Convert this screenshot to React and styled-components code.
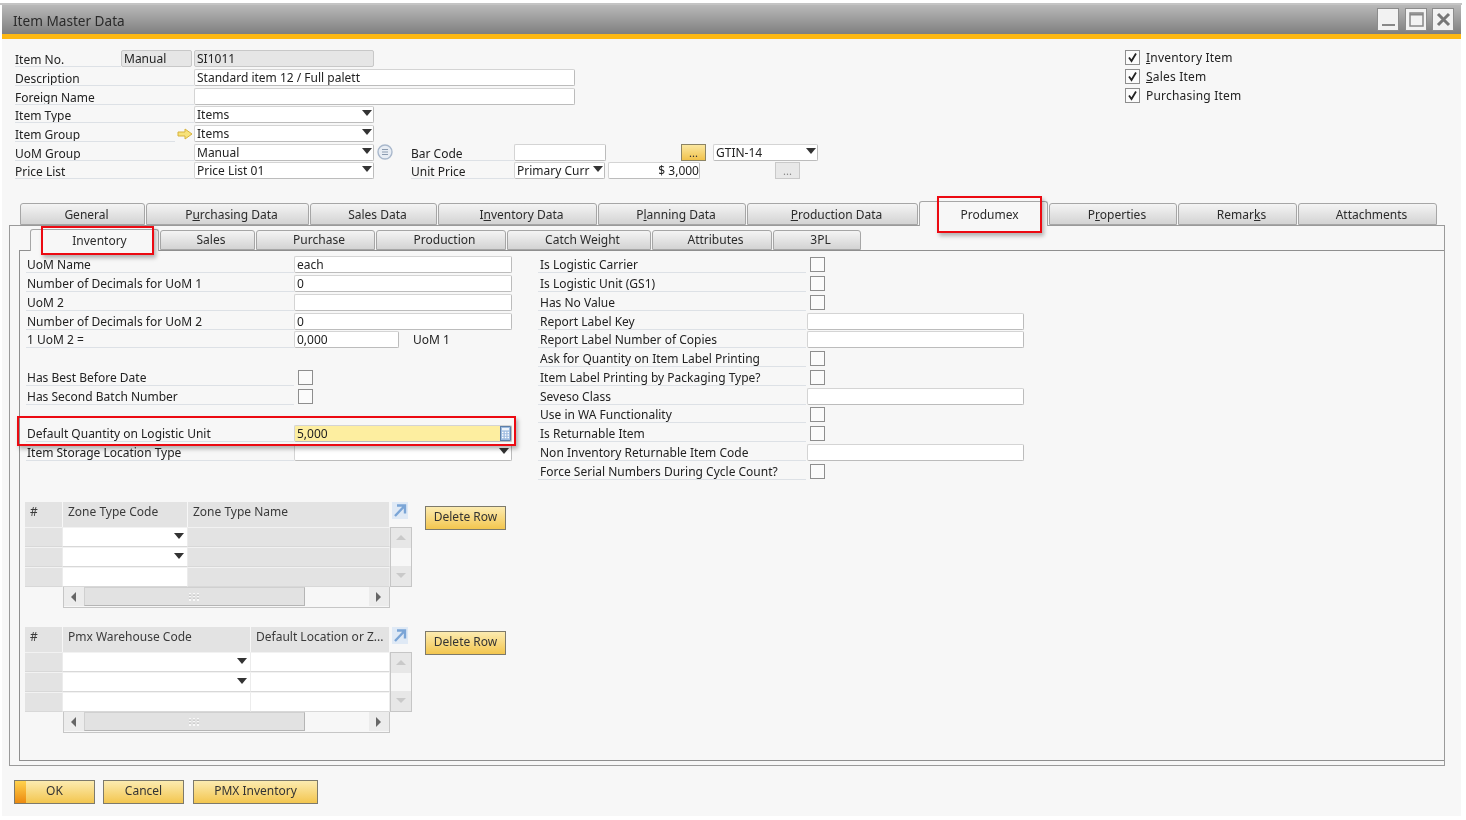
import React from "react";
import styled, { createGlobalStyle } from "styled-components";

const Global = createGlobalStyle`
  html, body { margin: 0; padding: 0; background: #fff; }
  body { font-family: "Noto Sans", "DejaVu Sans", sans-serif; font-size: 12px; color: #222; }
  * { box-sizing: border-box; }
`;

const Page = styled.div`
  width: 1466px; height: 820px; overflow: hidden; position: relative;
  filter: blur(0.35px);
`;
const TopStrip = styled.div`
  height: 5px; margin: 0 4px 0 0;
  border-bottom: 2px solid #c4c4c4;
`;
const Win = styled.div`
  width: 1459px; height: 811px; margin-left: 2px;
  background: #f7f7f7;
  display: flex; flex-direction: column;
`;
const TitleBar = styled.div`
  height: 29px; flex: none;
  background: linear-gradient(#b9b9b9, #7f7f7f);
  display: flex; align-items: center; justify-content: space-between;
  padding: 0 7px 0 11px;
`;
const Title = styled.div`font-size: 13.6px; color: #2a2a2a; padding-top: 2px;`;
const WinButtons = styled.div`display: flex; gap: 5px;`;
const WinBtn = styled.div`
  width: 22px; height: 23px; background: #f2f2f2; border: 1px solid #8c8c8c;
  display: flex; align-items: center; justify-content: center;
  margin-left: ${p => p.$ml || 0}px;
`;
const GoldBand = styled.div`height: 5px; flex: none; background: #fdb813;`;

const Header = styled.div`
  height: 162px; flex: none; display: flex; justify-content: space-between;
  padding: 10.5px 0 0 13px;
`;
const HeadLeft = styled.div`display: flex; flex-direction: column;`;
const HeadRow = styled.div`height: 18.7px; display: flex; align-items: center;`;
const UnderLabel = styled.div`
  width: ${p => p.$w}px; height: 17px; flex: none; line-height: 17px; padding-top: 1px;
  border-bottom: 1px solid #dde1e6; white-space: nowrap; overflow: hidden;
  margin-left: ${p => p.$ml || 0}px; margin-right: ${p => p.$mr || 0}px;
`;
const Field = styled.div`
  width: ${p => p.$w}px; height: 17px; flex: none; position: relative;
  background: ${p => p.$bg || "#fff"};
  border: 1px solid #d4d4d4; border-right-color: #bcbcbc; border-bottom-color: #bcbcbc; border-radius: 2px;
  padding-left: 2px; line-height: 16px; white-space: nowrap; overflow: hidden;
  text-align: ${p => p.$right ? "right" : "left"};
  margin-left: ${p => p.$ml || 0}px;
`;
const Caret = styled.span`
  position: absolute; right: ${p => p.$r ?? 1}px; top: ${p => p.$t ?? 3}px;
  width: 0; height: 0; border-left: 5px solid transparent; border-right: 5px solid transparent;
  border-top: 6px solid #333;
`;
const ReadField = styled(Field)`background: #e6e6e6; border-color: #c8c8c8;`;
const DotsBtn = styled.div`
  width: 25px; height: 17px; flex: none; margin-left: ${p => p.$ml}px;
  background: ${p => p.$gold ? "linear-gradient(#fbe7a0,#f1c24c)" : "#e8e8e8"};
  border: 1px solid ${p => p.$gold ? "#8c8465" : "#c9c9c9"};
  text-align: center; line-height: 15px; font-size: 11px;
  color: ${p => p.$gold ? "#333" : "#888"};
`;
const IconWrap = styled.span`
  display: inline-flex; flex: none; width: ${p => p.$w}px; justify-content: center; align-items: center;
  margin-left: ${p => p.$ml || 0}px;
`;
const HeadRight = styled.div`width: 337px; flex: none; margin-top: -1.5px;`;
const CheckLine = styled.div`height: 19px; display: flex; align-items: center; gap: 6px; margin-left: 1px;`;
const Box = styled.div`
  width: 15px; height: 15px; flex: none; background: #fbfbfb; border: 1px solid #8e8e8e;
  display: flex; align-items: center; justify-content: center;
`;
const CheckText = styled.span`letter-spacing: 0.2px;`;

const TabRow = styled.div`
  display: flex; align-items: flex-end; height: 24px; margin-left: 18px; position: relative; z-index: 2; flex: none;
`;
const Tab = styled.div`
  width: ${p => p.$w}px; height: ${p => p.$active ? 25 : 22}px; flex: none;
  margin-bottom: ${p => p.$active ? -1 : 0}px;
  background: ${p => p.$active ? "#f7f7f7" : "linear-gradient(#f4f4f4,#d3d3d3)"};
  border: 1px solid #a6a6a6; border-bottom: ${p => p.$active ? "none" : "1px solid #a6a6a6"};
  border-radius: 3px 3px 0 0; margin-right: 1px;
  text-align: center; line-height: ${p => p.$active ? 26 : 21}px; white-space: nowrap;
  padding-left: ${p => p.$active ? 12 : 8}px;
  color: #2b2b2b;
`;
const SubRow = styled(TabRow)`height: 22px; margin: 2px 0 0 20px;`;
const SubTab = styled(Tab)`
  height: ${p => p.$active ? 22 : 20}px; line-height: ${p => p.$active ? 21 : 18}px;
  padding-left: ${p => p.$active ? 10 : 7}px;
`;

const Outer = styled.div`
  width: 1436px; height: 541px; margin-left: 7px; flex: none;
  border: 1px solid #9a9a9a; border-left-width: 1px;
  display: flex; flex-direction: column;
`;
const Inner = styled.div`
  width: 1425px; height: 511px; margin-left: 9px; flex: none; margin-right: 0;
  border: 1px solid #8f8f8f; border-right: none;
  padding: 4.5px 0 0 6px; display: flex;
`;
const LeftCol = styled.div`width: 487px; flex: none; display: flex; flex-direction: column;`;
const RightCol = styled.div`width: 490px; margin-left: 25px; flex: none;`;
const FormRow = styled.div`height: 18.75px; display: flex; align-items: center;`;
const FormLabel = styled.div`
  width: 268px; height: 17px; line-height: 17px; padding-left: ${p => p.$pl || 1}px; flex: none;
  border-bottom: 1px solid #dde1e6; white-space: nowrap;
`;
const UomText = styled.span`margin-left: 14px;`;
const CalcIcon = styled.span`position: absolute; right: 0; top: 0; display: flex;`;
const RowBox = styled(Box)`margin-left: ${p => p.$ml ?? 4}px;`;

const GridWrap = styled.div`
  display: flex; align-items: flex-start; gap: 13px; margin-top: ${p => p.$mt}px;
`;
const Matrix = styled.div`
  display: grid;
  grid-template-columns: 38px ${p => p.$c1}px ${p => p.$c2}px 22px;
  grid-template-rows: 25px 20px 20px 20px 21px;
  margin-left: -1px;
`;
const Head = styled.div`
  background: #e3e3e3; border-right: 1px solid #f7f7f7; padding: 0.5px 0 0 5px;
  line-height: 20px; white-space: nowrap; overflow: hidden; color: #3a3a3a;
`;
const Cell = styled.div`
  background: ${p => p.$bg}; position: relative;
  border-top: 1px solid #f2f2f2; border-right: 1px solid #ececec; border-bottom: 1px solid #d8d8d8;
`;
const ExpandCell = styled.div`padding: 0 0 0 2px;`;
const VScroll = styled.div`
  grid-column: 4; grid-row: 2 / 5;
  border: 1px solid #c6c6c6; display: flex; flex-direction: column; justify-content: space-between;
  background: #f7f7f7;
`;
const ScrollBtn = styled.div`
  height: 20px; background: #e7e7e7; display: flex; align-items: center; justify-content: center;
`;
const HScroll = styled.div`
  grid-column: 2 / 4; grid-row: 5;
  border: 1px solid #c6c6c6; border-top: none; display: flex; align-items: center; justify-content: space-between;
  background: #f7f7f7; height: 21px;
`;
const HBtn = styled.div`width: 20px; height: 19px; background: #ececec; display: flex; align-items: center; justify-content: center;`;
const Thumb = styled.div`
  width: 221px; height: 19px; background: #e2e2e2; border: 1px solid #b5b5b5; border-top-color: #d0d0d0; border-left-color: #d0d0d0;
  display: flex; align-items: center; justify-content: center;
`;
const Spacer = styled.div`flex: 1;`;
const GoldBtn = styled.div`
  width: ${p => p.$w}px; height: ${p => p.$h}px; flex: none;
  margin-top: ${p => p.$mt || 0}px; margin-right: ${p => p.$mr || 0}px;
  background: linear-gradient(#fcebb0, #f3c64f);
  border: 1px solid #7d7a6c; text-align: center; line-height: ${p => p.$h - 4}px; color: #333;
  position: relative; overflow: hidden;
`;
const OkBand = styled.span`
  position: absolute; left: 0; top: 0; bottom: 0; width: 11px; background: linear-gradient(#ffd24d,#ec8a10);
`;
const OkLabel = styled.span`position: relative;`;
const Footer = styled.div`display: flex; padding: 14px 0 0 12px;`;

const RedBox = styled.div`
  position: absolute; left: ${p => p.$x}px; top: ${p => p.$y}px; width: ${p => p.$w}px; height: ${p => p.$h}px;
  border: 2px solid #ec0a12; box-shadow: 2px 3px 4px rgba(0,0,0,.28); z-index: 5; pointer-events: none;
`;

const Check = () => (
  <svg width="11" height="11" viewBox="0 0 11 11"><path d="M2 5.5 L4.5 9 L9 1.5" fill="none" stroke="#222" strokeWidth="1.8" /></svg>
);
const YArrow = () => (
  <svg width="16" height="12" viewBox="0 0 16 12"><path d="M1 4 H8 V1 L15 6 L8 11 V8 H1 Z" fill="#f7e27a" stroke="#d7b23c" /></svg>
);
const ListIcon = () => (
  <svg width="16" height="16" viewBox="0 0 16 16">
    <circle cx="8" cy="8" r="7" fill="#e8edf4" stroke="#a9b8cc" strokeWidth="1.4" />
    <path d="M5 5.5h6M5 8h6M5 10.5h6" stroke="#8b9bb0" strokeWidth="1" />
  </svg>
);
const Calc = () => (
  <svg width="11" height="15" viewBox="0 0 11 15">
    <rect x=".5" y=".5" width="10" height="14" fill="#9dbbe0" stroke="#5d7fa8" />
    <rect x="2" y="2" width="7" height="2.4" fill="#eef4fb" />
    <path d="M2 6.5h1.5M4.8 6.5h1.5M7.5 6.5H9M2 9h1.5M4.8 9h1.5M7.5 9H9M2 11.5h1.5M4.8 11.5h1.5M7.5 11.5H9" stroke="#fff" strokeWidth="1.3" />
  </svg>
);
const Expand = () => (
  <svg width="16" height="17" viewBox="0 0 16 17">
    <rect x="0" y="0" width="16" height="17" fill="#dfe9f5" />
    <path d="M3 14 L12 4.5 M5 3.5 H13 V11.5" fill="none" stroke="#7ba5d6" strokeWidth="2.4" />
  </svg>
);
const Grip = () => (
  <svg width="11" height="8" viewBox="0 0 11 8"><path d="M0 1h2M4 1h2M8 1h2M0 4h2M4 4h2M8 4h2M0 7h2M4 7h2M8 7h2" stroke="#fff" strokeWidth="1.5" /><path d="M0 2h2M4 2h2M8 2h2M0 5h2M4 5h2M8 5h2" stroke="#aaa" strokeWidth=".7" /></svg>
);
const Tri = ({ dir, color = "#666" }) => {
  const d = { up: "M1 8 L6 3 L11 8 Z", down: "M1 3 L6 8 L11 3 Z", left: "M8 1 L3 6 L8 11 Z", right: "M3 1 L8 6 L3 11 Z" }[dir];
  return <svg width="12" height="12" viewBox="0 0 12 12"><path d={d} fill={color} /></svg>;
};

const mainTabs = [
  [126, "General"], [164, <>P<u>u</u>rchasing Data</>], [128, "Sales Data"], [160, <>I<u>n</u>ventory Data</>],
  [149, <>P<u>l</u>anning Data</>], [172, <><u>P</u>roduction Data</>], [130, "Produmex", true],
  [129, <>P<u>r</u>operties</>], [120, <>Remar<u>k</u>s</>], [140, "Attachments"],
];
const subTabs = [
  [130, "Inventory", true], [96, "Sales"], [120, "Purchase"], [131, "Production"], [145, "Catch Weight"], [121, "Attributes"], [89, "3PL"],
];
const rightRows = [
  ["Is Logistic Carrier", "c"], ["Is Logistic Unit (GS1)", "c"], ["Has No Value", "c"],
  ["Report Label Key", "f"], ["Report Label Number of Copies", "f"],
  ["Ask for Quantity on Item Label Printing", "c"], ["Item Label Printing by Packaging Type?", "c"],
  ["Seveso Class", "f"], ["Use in WA Functionality", "c"], ["Is Returnable Item", "c"],
  ["Non Inventory Returnable Item Code", "f"], ["Force Serial Numbers During Cycle Count?", "c"],
];

const DataGrid = ({ mt, c1, c2, h1, h2, bg2 }) => (
  <GridWrap $mt={mt}>
    <Matrix $c1={c1} $c2={c2}>
      <Head>#</Head><Head>{h1}</Head><Head>{h2}</Head>
      <ExpandCell><Expand /></ExpandCell>
      {[0, 1, 2].map(i => (
        <React.Fragment key={i}>
          <Cell $bg="#e3e3e3" />
          <Cell $bg="#fff">{i < 2 && <Caret $r={3} $t={5} />}</Cell>
          <Cell $bg={bg2} />
        </React.Fragment>
      ))}
      <VScroll>
        <ScrollBtn><Tri dir="up" color="#c9c9c9" /></ScrollBtn>
        <ScrollBtn><Tri dir="down" color="#c9c9c9" /></ScrollBtn>
      </VScroll>
      <HScroll>
        <HBtn><Tri dir="left" /></HBtn>
        <Thumb><Grip /></Thumb>
        <Spacer />
        <HBtn><Tri dir="right" /></HBtn>
      </HScroll>
    </Matrix>
    <GoldBtn $w={81} $h={24} $mt={4}>Delete Row</GoldBtn>
  </GridWrap>
);

export default function App() {
  return (
    <Page>
      <Global />
      <TopStrip />
      <Win>
        <TitleBar>
          <Title>Item Master Data</Title>
          <WinButtons>
            <WinBtn><svg width="15" height="15" viewBox="0 0 15 15"><path d="M1 13h13" stroke="#888" strokeWidth="2" /></svg></WinBtn>
            <WinBtn $ml={1}><svg width="15" height="15" viewBox="0 0 15 15"><rect x="1" y="1" width="13" height="13" fill="none" stroke="#888" strokeWidth="1.5" /><path d="M1 2.5h13" stroke="#888" strokeWidth="2" /></svg></WinBtn>
            <WinBtn><svg width="15" height="15" viewBox="0 0 15 15"><path d="M2 2l11 11M13 2L2 13" stroke="#777" strokeWidth="3" /></svg></WinBtn>
          </WinButtons>
        </TitleBar>
        <GoldBand />
        <Header>
          <HeadLeft>
            <HeadRow>
              <UnderLabel $w={106} $mr={0}>Item No.</UnderLabel>
              <ReadField $w={71}>Manual</ReadField>
              <ReadField $w={180} $ml={2}>SI1011</ReadField>
            </HeadRow>
            <HeadRow><UnderLabel $w={179}>Description</UnderLabel><Field $w={381}>Standard item 12 / Full palett</Field></HeadRow>
            <HeadRow><UnderLabel $w={179}>Foreign Name</UnderLabel><Field $w={381} /></HeadRow>
            <HeadRow><UnderLabel $w={179}>Item Type</UnderLabel><Field $w={180}>Items<Caret /></Field></HeadRow>
            <HeadRow>
              <UnderLabel $w={160}>Item Group</UnderLabel>
              <IconWrap $w={19}><YArrow /></IconWrap>
              <Field $w={180}>Items<Caret /></Field>
            </HeadRow>
            <HeadRow>
              <UnderLabel $w={179}>UoM Group</UnderLabel>
              <Field $w={180}>Manual<Caret /></Field>
              <IconWrap $w={16} $ml={3}><ListIcon /></IconWrap>
              <UnderLabel $w={103} $ml={18}>Bar Code</UnderLabel>
              <Field $w={92}></Field>
              <DotsBtn $gold $ml={75}>...</DotsBtn>
              <Field $w={105} $ml={7}>GTIN-14<Caret /></Field>
            </HeadRow>
            <HeadRow>
              <UnderLabel $w={179}>Price List</UnderLabel>
              <Field $w={180}>Price List 01<Caret /></Field>
              <IconWrap $w={16} $ml={3} />
              <UnderLabel $w={103} $ml={18}>Unit Price</UnderLabel>
              <Field $w={91}>Primary Curr<Caret /></Field>
              <Field $w={92} $ml={3} $right>$ 3,000</Field>
              <DotsBtn $ml={75}>...</DotsBtn>
            </HeadRow>
          </HeadLeft>
          <HeadRight>
            <CheckLine><Box><Check /></Box><CheckText><u>I</u>nventory Item</CheckText></CheckLine>
            <CheckLine><Box><Check /></Box><CheckText><u>S</u>ales Item</CheckText></CheckLine>
            <CheckLine><Box><Check /></Box><CheckText>Purchasing Item</CheckText></CheckLine>
          </HeadRight>
        </Header>
        <TabRow>
          {mainTabs.map(([w, t, a], i) => <Tab key={i} $w={w - 1} $active={a}>{t}</Tab>)}
        </TabRow>
        <Outer>
          <SubRow>
            {subTabs.map(([w, t, a], i) => <SubTab key={i} $w={w - 1} $active={a}>{t}</SubTab>)}
          </SubRow>
          <Inner>
            <LeftCol>
              <FormRow><FormLabel>UoM Name</FormLabel><Field $w={218}>each</Field></FormRow>
              <FormRow><FormLabel>Number of Decimals for UoM 1</FormLabel><Field $w={218}>0</Field></FormRow>
              <FormRow><FormLabel>UoM 2</FormLabel><Field $w={218} /></FormRow>
              <FormRow><FormLabel>Number of Decimals for UoM 2</FormLabel><Field $w={218}>0</Field></FormRow>
              <FormRow><FormLabel>1 UoM 2 =</FormLabel><Field $w={105}>0,000</Field><UomText>UoM 1</UomText></FormRow>
              <FormRow />
              <FormRow><FormLabel>Has Best Before Date</FormLabel><RowBox $ml={4} /></FormRow>
              <FormRow><FormLabel>Has Second Batch Number</FormLabel><RowBox $ml={4} /></FormRow>
              <FormRow />
              <FormRow><FormLabel>Default Quantity on Logistic Unit</FormLabel><Field $w={218} $bg="#fdeea0">5,000<CalcIcon><Calc /></CalcIcon></Field></FormRow>
              <FormRow><FormLabel>Item Storage Location Type</FormLabel><Field $w={218}><Caret $r={2} /></Field></FormRow>
              <DataGrid mt={40} c1={125} c2={202} h1="Zone Type Code" h2="Zone Type Name" bg2="#e3e3e3" />
              <DataGrid mt={19} c1={188} c2={139} h1="Pmx Warehouse Code" h2="Default Location or Z..." bg2="#fff" />
            </LeftCol>
            <RightCol>
              {rightRows.map(([t, k]) => (
                <FormRow key={t}>
                  <FormLabel $pl={2}>{t}</FormLabel>
                  {k === "c" ? <RowBox /> : <Field $w={217} $ml={1} />}
                </FormRow>
              ))}
            </RightCol>
          </Inner>
        </Outer>
        <Footer>
          <GoldBtn $w={81} $h={24} $mr={8}><OkBand /><OkLabel>OK</OkLabel></GoldBtn>
          <GoldBtn $w={81} $h={24} $mr={9}>Cancel</GoldBtn>
          <GoldBtn $w={125} $h={24}>PMX Inventory</GoldBtn>
        </Footer>
      </Win>
      <RedBox $x={937} $y={196} $w={105} $h={37} />
      <RedBox $x={41} $y={226} $w={113} $h={29} />
      <RedBox $x={17} $y={416} $w={499} $h={30} />
    </Page>
  );
}
